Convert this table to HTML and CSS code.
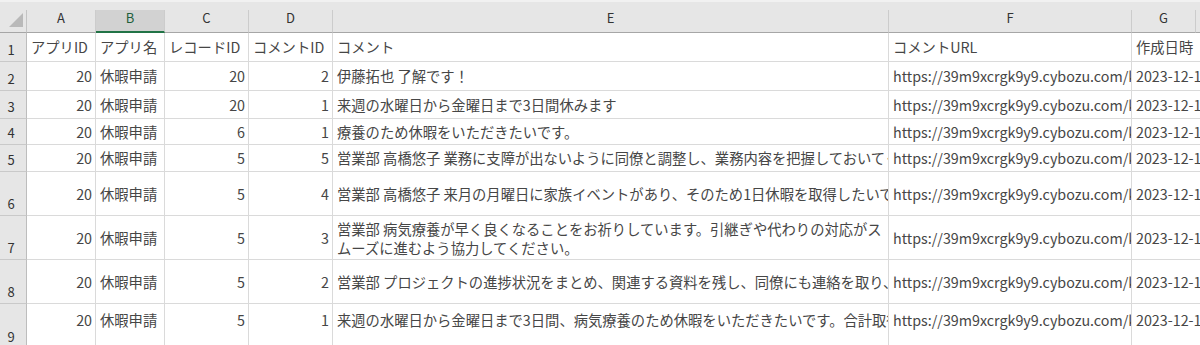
FILE: index.html
```html
<!DOCTYPE html>
<html lang="ja">
<head>
<meta charset="utf-8">
<title>Sheet</title>
<link rel="stylesheet" href="styles.css">
</head>
<body>
<div class="sheet">
  <div class="strip"></div>

  <div class="corner"><svg width="16" height="16" viewBox="0 0 16 16"><polygon points="15,1 15,15 1,15" fill="#b9b9b9"/></svg></div>
  <div class="ch">A</div>
  <div class="ch sel">B</div>
  <div class="ch">C</div>
  <div class="ch">D</div>
  <div class="ch">E</div>
  <div class="ch">F</div>
  <div class="ch">G</div>
  <div class="ch last"></div>

  <div class="rh">1</div>
  <div class="c">アプリID</div>
  <div class="c">アプリ名</div>
  <div class="c">レコードID</div>
  <div class="c">コメントID</div>
  <div class="c">コメント</div>
  <div class="c">コメントURL</div>
  <div class="c g">作成日時</div>

  <div class="rh">2</div>
  <div class="c num">20</div>
  <div class="c">休暇申請</div>
  <div class="c num">20</div>
  <div class="c num">2</div>
  <div class="c">伊藤拓也 了解です！</div>
  <div class="c">https://39m9xcrgk9y9.cybozu.com/k/20/show#record=20&amp;comment=2</div>
  <div class="c g">2023-12-15T02:10:00Z</div>

  <div class="rh">3</div>
  <div class="c num">20</div>
  <div class="c">休暇申請</div>
  <div class="c num">20</div>
  <div class="c num">1</div>
  <div class="c">来週の水曜日から金曜日まで3日間休みます</div>
  <div class="c">https://39m9xcrgk9y9.cybozu.com/k/20/show#record=20&amp;comment=1</div>
  <div class="c g">2023-12-15T01:55:00Z</div>

  <div class="rh">4</div>
  <div class="c num">20</div>
  <div class="c">休暇申請</div>
  <div class="c num">6</div>
  <div class="c num">1</div>
  <div class="c">療養のため休暇をいただきたいです。</div>
  <div class="c">https://39m9xcrgk9y9.cybozu.com/k/20/show#record=6&amp;comment=1</div>
  <div class="c g">2023-12-14T08:20:00Z</div>

  <div class="rh">5</div>
  <div class="c num">20</div>
  <div class="c">休暇申請</div>
  <div class="c num">5</div>
  <div class="c num">5</div>
  <div class="c">営業部 高橋悠子 業務に支障が出ないように同僚と調整し、業務内容を把握しておいてください。</div>
  <div class="c">https://39m9xcrgk9y9.cybozu.com/k/20/show#record=5&amp;comment=5</div>
  <div class="c g">2023-12-13T07:40:00Z</div>

  <div class="rh">6</div>
  <div class="c num">20</div>
  <div class="c">休暇申請</div>
  <div class="c num">5</div>
  <div class="c num">4</div>
  <div class="c">営業部 高橋悠子 来月の月曜日に家族イベントがあり、そのため1日休暇を取得したいです。</div>
  <div class="c">https://39m9xcrgk9y9.cybozu.com/k/20/show#record=5&amp;comment=4</div>
  <div class="c g">2023-12-13T06:30:00Z</div>

  <div class="rh">7</div>
  <div class="c num">20</div>
  <div class="c">休暇申請</div>
  <div class="c num">5</div>
  <div class="c num">3</div>
  <div class="c wrap">営業部 病気療養が早く良くなることをお祈りしています。引継ぎや代わりの対応がス<br>ムーズに進むよう協力してください。</div>
  <div class="c">https://39m9xcrgk9y9.cybozu.com/k/20/show#record=5&amp;comment=3</div>
  <div class="c g">2023-12-13T05:15:00Z</div>

  <div class="rh">8</div>
  <div class="c num">20</div>
  <div class="c">休暇申請</div>
  <div class="c num">5</div>
  <div class="c num">2</div>
  <div class="c">営業部 プロジェクトの進捗状況をまとめ、関連する資料を残し、同僚にも連絡を取り、引継ぎを行います。</div>
  <div class="c">https://39m9xcrgk9y9.cybozu.com/k/20/show#record=5&amp;comment=2</div>
  <div class="c g">2023-12-13T04:05:00Z</div>

  <div class="rh">9</div>
  <div class="c num r9">20</div>
  <div class="c r9">休暇申請</div>
  <div class="c num r9">5</div>
  <div class="c num r9">1</div>
  <div class="c r9">来週の水曜日から金曜日まで3日間、病気療養のため休暇をいただきたいです。合計取得日数は3日です。</div>
  <div class="c r9">https://39m9xcrgk9y9.cybozu.com/k/20/show#record=5&amp;comment=1</div>
  <div class="c g r9">2023-12-13T03:00:00Z</div>
</div>
</body>
</html>
```

FILE: styles.css
```css
html, body {
  margin: 0;
  padding: 0;
  background: #ffffff;
}

body {
  width: 1200px;
  height: 345px;
  overflow: hidden;
  font-family: "Noto Sans CJK JP", "Noto Sans", sans-serif;
  color: #464646;
}

.sheet {
  display: grid;
  grid-template-columns: 27px 69px 69px 84px 84px 556px 243px 64px 1fr;
  grid-template-rows: 10px 23px 29px 29px 28px 26px 27px 44px 44px 44px 45px;
  width: 1200px;
}

.strip {
  grid-column: 1 / -1;
  background: #e6e6e6;
  border-top: 2px solid #f1f1f1;
  box-sizing: border-box;
}

.corner {
  background: #e6e6e6;
  border-right: 1px solid #c4c4c4;
  border-bottom: 1px solid #a6a6a6;
  box-sizing: border-box;
  display: flex;
  align-items: flex-start;
  justify-content: flex-end;
  padding: 2px 2px 0 0;
}

.ch {
  background: #e6e6e6;
  border-right: 1px solid #cccccc;
  border-bottom: 1px solid #a6a6a6;
  box-sizing: border-box;
  display: flex;
  justify-content: center;
  align-items: flex-start;
  font-size: 13px;
  line-height: 16px;
  color: #333333;
}

.ch.sel {
  background: #d2d2d2;
  border-bottom: 2px solid #217346;
  color: #1f5f3c;
}

.ch.last {
  border-right: none;
}

.rh {
  background: #e6e6e6;
  border-right: 1px solid #bdbdbd;
  border-bottom: 1px solid #c9c9c9;
  box-sizing: border-box;
  display: flex;
  justify-content: center;
  align-items: flex-end;
  padding: 0 4px 3px 0;
  font-size: 13px;
  line-height: 16px;
  color: #333333;
}

.c {
  border-right: 1px solid #dadada;
  border-bottom: 1px solid #dadada;
  box-sizing: border-box;
  display: flex;
  align-items: center;
  padding: 0 3px 0 4px;
  overflow: hidden;
  white-space: nowrap;
  font-size: 14.3px;
  line-height: 18px;
}

.c.num {
  justify-content: flex-end;
  padding-right: 3px;
}

.c.g {
  grid-column: span 2;
  border-right: none;
}

.c.wrap {
  white-space: normal;
  line-height: 19px;
}

.c.r9 {
  padding-bottom: 12px;
}
```
